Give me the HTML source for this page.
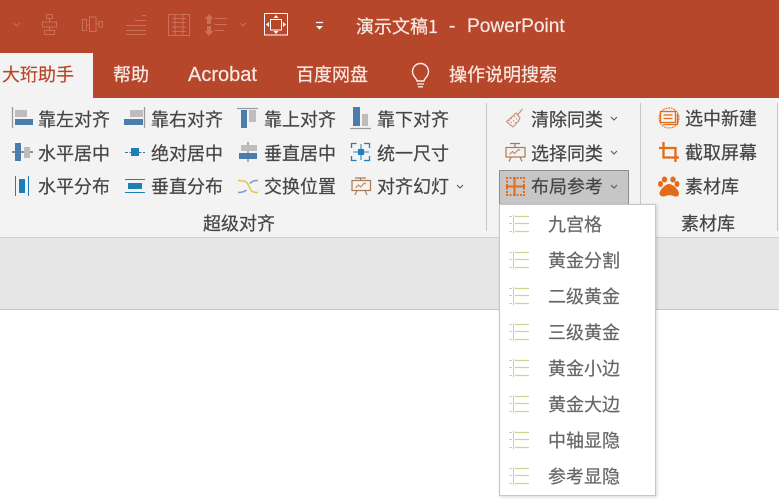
<!DOCTYPE html>
<html lang="zh"><head><meta charset="utf-8"><title>PowerPoint</title>
<style>
html,body{margin:0;padding:0;width:779px;height:503px;overflow:hidden;background:#fff}
body{position:relative;font-family:"Liberation Sans","Noto Sans CJK SC",sans-serif}
.b{position:absolute}
.t{position:absolute;font-size:18px;line-height:24px;height:24px;white-space:nowrap;color:#444;font-family:"Noto Sans CJK SC","Liberation Sans",sans-serif;-webkit-text-stroke:.2px currentColor}
.w{color:#f8e9e4}
.m{color:#666}
.l{font-family:"Liberation Sans",sans-serif;font-size:19.1px}
svg{position:absolute;left:0;top:0}
</style></head><body>
<div class="b" style="left:0;top:0;width:779px;height:98px;background:#B7472A"></div>
<div class="b" style="left:0;top:53px;width:93px;height:45px;background:#F3F3F3"></div>
<div class="b" style="left:0;top:98px;width:779px;height:139px;background:#F3F3F3"></div>
<div class="b" style="left:0;top:237px;width:779px;height:1px;background:#D0D0D0"></div>
<div class="b" style="left:0;top:238px;width:779px;height:71px;background:#E6E6E6"></div>
<div class="b" style="left:0;top:309px;width:779px;height:1px;background:#C6C6C6"></div>
<div class="b" style="left:486px;top:103px;width:1px;height:128px;background:#C6C6C6"></div>
<div class="b" style="left:640px;top:103px;width:1px;height:128px;background:#C6C6C6"></div>
<div class="b" style="left:777px;top:103px;width:1px;height:128px;background:#C6C6C6"></div>
<div class="b" style="left:499px;top:170px;width:128px;height:33px;background:#C6C6C6;border:1px solid #8E8E8E"></div>
<div class="b" style="left:499px;top:204px;width:155px;height:290px;background:#fff;border:1px solid #C6C6C6;box-shadow:1px 1px 3px rgba(0,0,0,.16)"></div>

<span class="t w" style="left:356px;top:14px">演示文稿1</span>
<span class="t w l" style="left:449px;top:15px">-</span>
<span class="t w l" style="left:467px;top:15px">PowerPoint</span>
<span class="t" style="left:2px;top:62px;color:#B7472A">大珩助手</span>
<span class="t w" style="left:113px;top:62px">帮助</span>
<span class="t w l" style="left:188px;top:63px;font-size:20px">Acrobat</span>
<span class="t w" style="left:296px;top:62px">百度网盘</span>
<span class="t w" style="left:449px;top:62px">操作说明搜索</span>

<span class="t" style="left:38px;top:107px">靠左对齐</span>
<span class="t" style="left:151px;top:107px">靠右对齐</span>
<span class="t" style="left:264px;top:107px">靠上对齐</span>
<span class="t" style="left:377px;top:107px">靠下对齐</span>
<span class="t" style="left:38px;top:141px">水平居中</span>
<span class="t" style="left:151px;top:141px">绝对居中</span>
<span class="t" style="left:264px;top:141px">垂直居中</span>
<span class="t" style="left:377px;top:141px">统一尺寸</span>
<span class="t" style="left:38px;top:174px">水平分布</span>
<span class="t" style="left:151px;top:174px">垂直分布</span>
<span class="t" style="left:264px;top:174px">交换位置</span>
<span class="t" style="left:377px;top:174px">对齐幻灯</span>
<span class="t" style="left:203px;top:211px">超级对齐</span>
<span class="t" style="left:531px;top:107px">清除同类</span>
<span class="t" style="left:531px;top:141px">选择同类</span>
<span class="t" style="left:531px;top:174px">布局参考</span>
<span class="t" style="left:685px;top:106px">选中新建</span>
<span class="t" style="left:685px;top:140px">截取屏幕</span>
<span class="t" style="left:685px;top:174px">素材库</span>
<span class="t" style="left:681px;top:211px">素材库</span>

<span class="t m" style="left:548px;top:212px">九宫格</span>
<span class="t m" style="left:548px;top:248px">黄金分割</span>
<span class="t m" style="left:548px;top:284px">二级黄金</span>
<span class="t m" style="left:548px;top:320px">三级黄金</span>
<span class="t m" style="left:548px;top:356px">黄金小边</span>
<span class="t m" style="left:548px;top:392px">黄金大边</span>
<span class="t m" style="left:548px;top:428px">中轴显隐</span>
<span class="t m" style="left:548px;top:464px">参考显隐</span>

<svg width="779" height="503" viewBox="0 0 779 503" fill="none">
<defs><g id="g"><path d="M513.500 0v18.500" stroke="#C9D78C"/><path d="M509 1.500h3M509 8.500h3M509 16.500h3" stroke="#C9D78C"/><path d="M515 1.500h14M515 8.500h14M515 16.500h14" stroke="#C9D78C" stroke-width="1.200"/></g></defs>
<!-- quick access -->
<g stroke="#CB6F56" stroke-width="1">
<path d="M13.500 23l3 3 3-3M240 23l3 3 3-3"/>
<rect x="46.500" y="14.500" width="6" height="4"/><rect x="42.500" y="22" width="14" height="5"/><rect x="44.500" y="30.500" width="10" height="4"/><path d="M49.500 18.500v3.500M49.500 27v3.500"/>
<rect x="82.500" y="19.500" width="4" height="11"/><rect x="89.500" y="17" width="6.500" height="14.500"/><rect x="99" y="21.500" width="3.500" height="5.500"/><path d="M86.500 25h3M96 24h3"/>
<path d="M126 25.500h20M126 30.500h20M126 34.500h20M135 20.500h11M142 15.500h4"/>
<rect x="168.500" y="14.500" width="21" height="21"/><path d="M172 18.500h14M172 22.500h14M172 27h14M172 31.500h14M175 15v20M183 15v20"/>
<path d="M215 18.500h12M215 24.500h12M215 30.500h9"/>
</g>
<path d="M209 14l4.500 5H211v5h-4v-5h-2.500zM209 36l4.500-5H211v-5h-4v5h-2.500z" fill="#CB6F56"/>
<rect x="264.500" y="13.500" width="23" height="21.500" stroke="#fff"/><rect x="270.500" y="19.500" width="11" height="10.500" stroke="#fff"/>
<path d="M276 15l2.500 3h-5zM276 34l2.500-3h-5zM266 24.500l3-2.500v5zM286 24.500l-3-2.500v5z" fill="#fff"/>
<path d="M316 22.500h7" stroke="#fff" stroke-width="1.300"/><path d="M316 26h7l-3.500 3.500z" fill="#fff"/>
<!-- bulb -->
<path d="M417 81c-.5-3-4.500-4.500-4.500-9.500a8 8 0 0 1 16 0c0 5-4 6.500-4.500 9.500z" stroke="#fbeee9" stroke-width="1.400"/><path d="M417 84h7M418 86.800h5" stroke="#fbeee9" stroke-width="1.300"/>
<!-- row 1 -->
<path d="M12.500 107v21" stroke="#9a9a9a" stroke-width="1.300"/><rect x="15" y="110" width="12" height="7" fill="#BDBDBD"/><rect x="15" y="119" width="18" height="6" fill="#4A7CAF"/>
<path d="M144.500 107v21" stroke="#9a9a9a" stroke-width="1.300"/><rect x="130" y="110" width="13" height="7" fill="#BDBDBD"/><rect x="124" y="119" width="19" height="6" fill="#4A7CAF"/>
<path d="M237 108.500h21" stroke="#9a9a9a" stroke-width="1.300"/><rect x="241" y="110" width="6" height="18" fill="#4A7CAF"/><rect x="249" y="110" width="7" height="12" fill="#BDBDBD"/>
<path d="M350 128.500h21" stroke="#9a9a9a" stroke-width="1.300"/><rect x="353" y="107" width="7" height="19" fill="#4A7CAF"/><rect x="362" y="114" width="6" height="12" fill="#BDBDBD"/>
<!-- row 2 -->
<path d="M12 152h21" stroke="#8f8f8f" stroke-width="2"/><rect x="15" y="143" width="6" height="18" fill="#4A7CAF"/><rect x="24" y="147" width="6" height="11" fill="#BDBDBD"/>
<path d="M125 152.500h20" stroke="#1F7FB3" stroke-dasharray="3 1.500"/><rect x="131" y="148" width="8" height="8" fill="#1F7FB3"/>
<path d="M248 142v20" stroke="#9a9a9a" stroke-width="1.500"/><rect x="241" y="145" width="16" height="6" fill="#BDBDBD"/><rect x="239" y="153" width="18" height="6" fill="#4A7CAF"/>
<path d="M351.500 148v-4.500h5M364 143.500h5.500v4.500M351.500 156v4.500h5M369.500 156v4.500H364" stroke="#1F7FB3" stroke-width="1.300"/><rect x="358" y="149" width="6" height="6" fill="#1F7FB3"/><path d="M361 144v5M361 155v5M353 152h5M364 152h5" stroke="#1F7FB3"/>
<!-- row 3 -->
<path d="M15.500 176v20M28.500 176v20" stroke="#1F7FB3"/><rect x="19" y="179" width="6" height="14" fill="#1F7FB3"/>
<path d="M125 179.500h20M125 192.500h20" stroke="#1F7FB3"/><rect x="128" y="183" width="14" height="6" fill="#1F7FB3"/>
<path d="M258 180.500c-4 0-6 .5-8 3M238 192.500c4 0 6-.5 8.500-2.500" stroke="#7D9AC6" stroke-width="1.500"/>
<path d="M238 180.500c10 0 9.500 3 11 6s1.500 6 9 6" stroke="#DCCB4A" stroke-width="1.500"/>
<g stroke="#A87B58" stroke-width="1.200"><rect x="352" y="180.500" width="18.500" height="10"/><path d="M355 178h11M360.500 178v2.500M357 190.500l-2 4.500M365 190.500l2 4.500"/><path d="M355.500 188l3-3 2 2 4-4 1.500 1" stroke="#C08A68"/></g>
<path d="M457 185l3 3 3-3M611 117l3 3 3-3M611 151l3 3 3-3M611 185l3 3 3-3" stroke="#555"/>
<!-- column 2 -->
<g stroke="#C58F72" stroke-width="1.100"><path d="M522.500 109l-5 6"/><path d="M516 113c-2 2-5 5-9.500 8.500l6.500 5.500c3-3 6-6 7-9z"/><path d="M511 118l6 6M514 116l5 6M508.500 120l4.500 4" stroke-dasharray="1.500 1.500"/></g>
<g stroke="#A87B58" stroke-width="1.200"><rect x="506" y="147.500" width="19" height="9.500"/><path d="M510 143.500h10M515 143.500v4M511 157l-2 4.500M520 157l2 4.500"/><path d="M509.500 154.500l3-3 2 2 4-4 1.500 1" stroke="#C08A68"/></g>
<g stroke="#E36C1B"><path d="M506 186.500h19M514.500 177v19" stroke-width="2"/><path d="M507 177v19M524 177v19M506 178h19M506 195h19" stroke-dasharray="2 1.500" stroke-width="2"/></g>
<!-- column 3 -->
<g stroke="#E36C1B"><circle cx="669" cy="118" r="10" stroke-dasharray="2 .7"/><rect x="660.500" y="111.500" width="15" height="11" fill="#F3F3F3" stroke-width="1.300"/><path d="M677.500 114v10.500H663M663.500 115h9M663.500 118.500h9" stroke-width="1.300"/></g>
<path d="M663.500 142v15.500H679M659 148h16.500v14" stroke="#E36C1B" stroke-width="2.300"/>
<g fill="#E36C1B"><ellipse cx="660.500" cy="184" rx="2.500" ry="3"/><ellipse cx="664.500" cy="179.500" rx="2.700" ry="3"/><ellipse cx="673" cy="179.500" rx="2.700" ry="3"/><ellipse cx="677" cy="184" rx="2.500" ry="3"/><path d="M669 184c4 0 10 6 10 9.500s-3.500 3.500-5.500 2.500-6-1-8 0-6 .5-6-2.500 5.500-9.500 9.500-9.500z"/></g>
<!-- menu icons -->
<use href="#g" y="215"/><use href="#g" y="251"/><use href="#g" y="287"/><use href="#g" y="323"/><use href="#g" y="359"/><use href="#g" y="395"/><use href="#g" y="431"/><use href="#g" y="467"/>
</svg>
</body></html>
